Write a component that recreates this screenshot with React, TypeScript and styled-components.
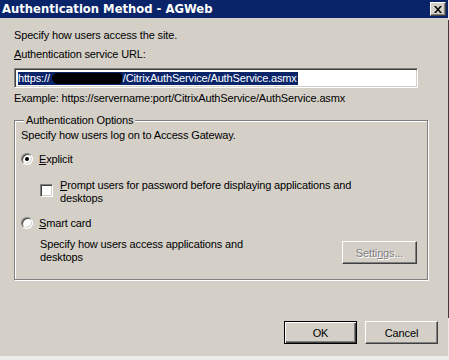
import styled, { createGlobalStyle } from "styled-components";

const GlobalStyle = createGlobalStyle`
  html, body {
    margin: 0;
    padding: 0;
    background: #ececec;
  }
  body {
    font-family: "Liberation Sans", Arial, sans-serif;
    font-size: 11px;
    letter-spacing: -0.15px;
    color: #000;
  }
`;

const Page = styled.div`
  display: flex;
  align-items: flex-start;
`;

const Dialog = styled.div`
  width: 448px;
  height: 356px;
  background: #d4d0c8;
  display: flex;
  flex-direction: column;
`;

const EdgeStrip = styled.div`
  width: 1px;
  height: 298px;
  margin-top: 20px;
  background: #3a3a3a;
`;

const TitleBar = styled.div`
  height: 18px;
  background: #0a246a;
  display: flex;
  align-items: center;
  justify-content: space-between;
  padding: 0 2px 0 2px;
`;

const Title = styled.span`
  color: #fff;
  font-family: "DejaVu Sans", Verdana, sans-serif;
  font-weight: bold;
  font-size: 11.6px;
  letter-spacing: 0;
`;

const CloseButton = styled.div`
  width: 16px;
  height: 14px;
  box-sizing: border-box;
  background: #d4d0c8;
  border-top: 1px solid #fff;
  border-left: 1px solid #fff;
  border-right: 1px solid #404040;
  border-bottom: 1px solid #404040;
  box-shadow: inset -1px -1px 0 #808080;
  display: flex;
  align-items: center;
  justify-content: center;
`;

const Content = styled.div`
  padding: 0 10px 0 14px;
  display: flex;
  flex-direction: column;
  flex: 1;
`;

const Line = styled.div<{ $top: number; $indent?: number }>`
  line-height: 13px;
  height: 13px;
  margin-top: ${(p) => p.$top}px;
  margin-left: ${(p) => p.$indent ?? 0}px;
  white-space: nowrap;
`;

const UrlInput = styled.div`
  margin-top: 7px;
  width: 404px;
  height: 20px;
  box-sizing: border-box;
  background: #fff;
  border-top: 1px solid #808080;
  border-left: 1px solid #808080;
  border-right: 1px solid #fff;
  border-bottom: 1px solid #fff;
  box-shadow: inset 1px 1px 0 #404040, inset -1px -1px 0 #d4d0c8;
  padding: 3px 0 0 3px;
  display: flex;
`;

const Selection = styled.span`
  background: #0a246a;
  color: #fff;
  line-height: 13px;
  height: 13px;
  padding-right: 1px;
  white-space: nowrap;
  display: inline-flex;
  align-items: center;
`;

const Redacted = styled.span`
  display: inline-block;
  width: 70px;
  height: 11px;
  background: #000;
  border-radius: 5px 3px 4px 6px;
  margin: 0 1px 0 2px;
`;

const GroupBox = styled.div`
  position: relative;
  margin-top: 15px;
  width: 414px;
  height: 160px;
  box-sizing: border-box;
  border: 1px solid #808080;
  box-shadow: inset 1px 1px 0 #fff, 1px 1px 0 #fff;
  padding: 8px 10px 0 6px;
  display: flex;
  flex-direction: column;
`;

const Legend = styled.span`
  position: absolute;
  top: -7px;
  left: 9px;
  padding: 0 2px;
  background: #d4d0c8;
  line-height: 13px;
`;

const OptionRow = styled.div<{ $top: number; $indent?: number }>`
  display: flex;
  align-items: flex-start;
  margin-top: ${(p) => p.$top}px;
  margin-left: ${(p) => p.$indent ?? 0}px;
  line-height: 13px;
`;

const Radio = styled.span<{ $checked?: boolean }>`
  width: 12px;
  height: 12px;
  box-sizing: border-box;
  border-radius: 50%;
  background: #fff;
  border: 1px solid;
  border-color: #808080 #fff #fff #808080;
  box-shadow: inset 1px 1px 0 #404040, inset -1px -1px 0 #d4d0c8;
  display: flex;
  align-items: center;
  justify-content: center;
  margin-right: 6px;
  flex-shrink: 0;

  &::after {
    content: "";
    width: 4px;
    height: 4px;
    border-radius: 50%;
    background: ${(p) => (p.$checked ? "#000" : "transparent")};
  }
`;

const Checkbox = styled.span`
  width: 13px;
  height: 13px;
  box-sizing: border-box;
  background: #fff;
  border-top: 1px solid #808080;
  border-left: 1px solid #808080;
  border-right: 1px solid #fff;
  border-bottom: 1px solid #fff;
  box-shadow: inset 1px 1px 0 #404040, inset -1px -1px 0 #d4d0c8;
  margin: 5px 7px 0 0;
  flex-shrink: 0;
`;

const Wrapped = styled.div<{ $width: number }>`
  width: ${(p) => p.$width}px;
  line-height: 13px;
`;

const DescRow = styled.div`
  display: flex;
  justify-content: space-between;
  align-items: flex-start;
  margin-top: 8px;
  margin-left: 19px;
`;

const Button = styled.div<{ $default?: boolean; $disabled?: boolean }>`
  width: 73px;
  height: 23px;
  box-sizing: border-box;
  background: #d4d0c8;
  display: flex;
  align-items: center;
  justify-content: center;
  border: 1px solid;
  border-color: ${(p) => (p.$default ? "#000" : "#fff #404040 #404040 #fff")};
  box-shadow: ${(p) =>
    p.$default
      ? "inset 1px 1px 0 #fff, inset -1px -1px 0 #404040, inset -2px -2px 0 #808080"
      : "inset -1px -1px 0 #808080"};
  color: ${(p) => (p.$disabled ? "#808080" : "#000")};
  text-shadow: ${(p) => (p.$disabled ? "1px 1px 0 #fff" : "none")};
`;

const SettingsButton = styled(Button)`
  margin-top: 3px;
  width: 75px;
`;

const Footer = styled.div`
  margin-top: auto;
  margin-bottom: 12px;
  display: flex;
  justify-content: flex-end;
  gap: 8px;
`;

export default function App() {
  return (
    <>
      <GlobalStyle />
      <Page>
        <Dialog>
          <TitleBar>
            <Title>Authentication Method - AGWeb</Title>
            <CloseButton>
              <svg width="8" height="7" viewBox="0 0 8 7">
                <path d="M0 0h2l2 2.5L6 0h2L5 3.5 8 7H6L4 4.5 2 7H0l3-3.5z" fill="#000" />
              </svg>
            </CloseButton>
          </TitleBar>
          <Content>
            <Line $top={11}>Specify how users access the site.</Line>
            <Line $top={6}>
              <u>A</u>uthentication service URL:
            </Line>
            <UrlInput>
              <Selection>
                https://
                <Redacted />
                /CitrixAuthService/AuthService.asmx
              </Selection>
            </UrlInput>
            <Line $top={4}>
              Example: https://servername:port/CitrixAuthService/AuthService.asmx
            </Line>
            <GroupBox>
              <Legend>Authentication Options</Legend>
              <Line $top={0}>Specify how users log on to Access Gateway.</Line>
              <OptionRow $top={11}>
                <Radio $checked />
                <span>
                  <u>E</u>xplicit
                </span>
              </OptionRow>
              <OptionRow $top={13} $indent={19}>
                <Checkbox />
                <Wrapped $width={300}>
                  <u>P</u>rompt users for password before displaying applications and desktops
                </Wrapped>
              </OptionRow>
              <OptionRow $top={12}>
                <Radio />
                <span>
                  <u>S</u>mart card
                </span>
              </OptionRow>
              <DescRow>
                <Wrapped $width={215}>
                  Specify how users access applications and desktops
                </Wrapped>
                <SettingsButton $disabled>
                  <span>
                    Setti<u>n</u>gs...
                  </span>
                </SettingsButton>
              </DescRow>
            </GroupBox>
            <Footer>
              <Button $default>OK</Button>
              <Button>Cancel</Button>
            </Footer>
          </Content>
        </Dialog>
        <EdgeStrip />
      </Page>
    </>
  );
}
